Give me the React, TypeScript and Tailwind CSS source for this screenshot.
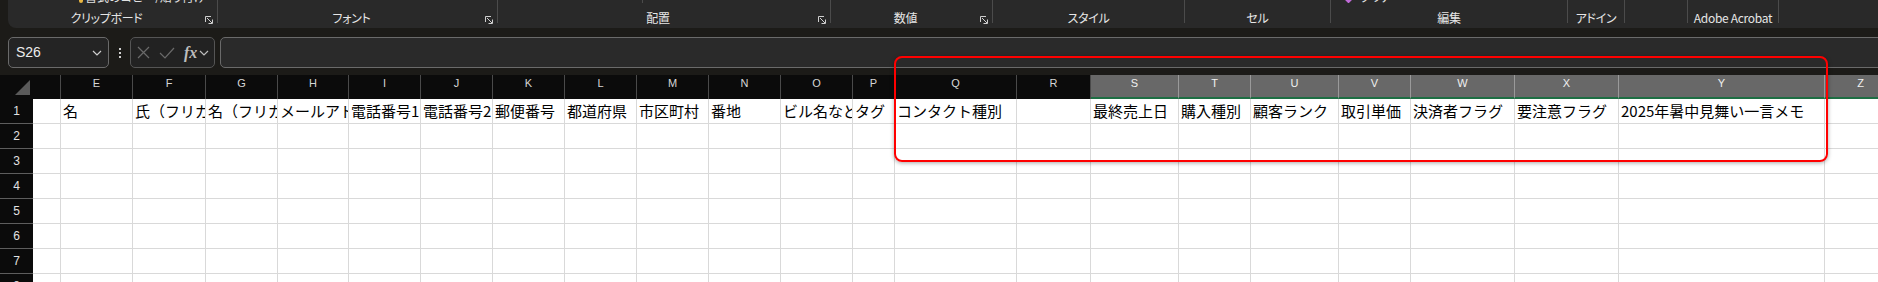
import React from "react";

type Col = { l: string; w: string; t: string; s?: boolean };

const cols: Col[] = [
  { l: "", w: "w-[28px]", t: "" },
  { l: "E", w: "w-[72px]", t: "名" },
  { l: "F", w: "w-[73px]", t: "氏（フリガナ）" },
  { l: "G", w: "w-[72px]", t: "名（フリガナ）" },
  { l: "H", w: "w-[71px]", t: "メールアドレス" },
  { l: "I", w: "w-[72px]", t: "電話番号1" },
  { l: "J", w: "w-[72px]", t: "電話番号2" },
  { l: "K", w: "w-[72px]", t: "郵便番号" },
  { l: "L", w: "w-[72px]", t: "都道府県" },
  { l: "M", w: "w-[72px]", t: "市区町村" },
  { l: "N", w: "w-[72px]", t: "番地" },
  { l: "O", w: "w-[72px]", t: "ビル名など" },
  { l: "P", w: "w-[42px]", t: "タグ" },
  { l: "Q", w: "w-[122px]", t: "コンタクト種別" },
  { l: "R", w: "w-[74px]", t: "" },
  { l: "S", w: "w-[88px]", t: "最終売上日", s: true },
  { l: "T", w: "w-[72px]", t: "購入種別", s: true },
  { l: "U", w: "w-[88px]", t: "顧客ランク", s: true },
  { l: "V", w: "w-[72px]", t: "取引単価", s: true },
  { l: "W", w: "w-[104px]", t: "決済者フラグ", s: true },
  { l: "X", w: "w-[104px]", t: "要注意フラグ", s: true },
  { l: "Y", w: "w-[206px]", t: "2025年暑中見舞い一言メモ", s: true },
  { l: "Z", w: "w-[72px]", t: "", s: true },
];

const JP = "font-['Noto_Sans_CJK_JP','Noto_Sans',sans-serif]";
const UI = "font-['Liberation_Sans','Noto_Sans_CJK_JP',sans-serif]";

function Launcher() {
  return (
    <div className="w-[12px] shrink-0 flex justify-end pr-[4px] mt-[3px]">
      <svg width="8" height="8" viewBox="0 0 8 8" fill="none" stroke="#cfcfcf" strokeWidth="1">
        <path d="M0.5 6 V0.5 H6" />
        <path d="M2 2 L7 7" />
        <path d="M7.5 3.5 V7.5 H3.5" />
      </svg>
    </div>
  );
}

function Sep() {
  return <div className="w-px h-[23px] bg-[#4b4b4b] shrink-0" />;
}

function Group({
  w,
  label,
  launcher,
  top,
}: {
  w: string;
  label?: string;
  launcher?: boolean;
  top?: React.ReactNode;
}) {
  return (
    <div className={`${w} shrink-0 flex flex-col`}>
      <div className="h-[3px] overflow-hidden flex items-end">{top}</div>
      <div className="mt-[7px] h-[16px] flex items-center">
        <div
          className={`flex-1 text-center text-[12px] leading-[16px] text-[#e6e6e6] whitespace-nowrap ${JP} [font-feature-settings:'palt'] tracking-[-0.3px]`}
        >
          {label}
        </div>
        {launcher && <Launcher />}
      </div>
    </div>
  );
}

function Chevron({ color }: { color: string }) {
  return (
    <svg width="10" height="6" viewBox="0 0 10 6" fill="none" stroke={color} strokeWidth="1.2">
      <path d="M1 1 L5 5 L9 1" />
    </svg>
  );
}

export default function App() {
  const rows = [1, 2, 3, 4, 5, 6, 7, 8];
  return (
    <div className={`w-[1878px] h-[282px] overflow-hidden bg-[#1c1b18] relative ${JP}`}>
      {/* Ribbon */}
      <div className="ml-[8px] h-[28px] bg-[#292929] rounded-bl-[8px] flex overflow-hidden">
        <Group
          w="w-[209px]"
          label="クリップボード"
          launcher
          top={
            <div className="flex items-end ml-[71px] gap-[2px]">
              <div className="w-[4px] h-[3px] bg-[#e8b540] rounded-b-[2px]" />
              <span className="text-[12px] leading-[12px] text-[#e0e0e0] whitespace-nowrap [font-feature-settings:'palt']">
                書式のコピー/貼り付け
              </span>
            </div>
          }
        />
        <Sep />
        <Group w="w-[279px]" label="フォント" launcher />
        <Sep />
        <Group
          w="w-[332px]"
          label="配置"
          launcher
          top={<div className="ml-[144px] w-px h-[3px] bg-[#4b4b4b]" />}
        />
        <Sep />
        <Group w="w-[161px]" label="数値" launcher />
        <Sep />
        <Group w="w-[191px]" label="スタイル" />
        <Sep />
        <Group w="w-[145px]" label="セル" />
        <Sep />
        <Group
          w="w-[236px]"
          label="編集"
          top={
            <div className="flex items-end ml-[14px] gap-[8px]">
              <div className="w-[7px] h-[7px] rotate-45 bg-[#c06ad8] mb-[1px]" />
              <span className="text-[12px] leading-[12px] text-[#e0e0e0] whitespace-nowrap [font-feature-settings:'palt']">
                クリア
              </span>
            </div>
          }
        />
        <Sep />
        <Group w="w-[56px]" label="アドイン" />
        <Sep />
        <Group w="w-[62px]" />
        <Sep />
        <Group w="w-[90px]" label="Adobe Acrobat" />
        <Sep />
        <div className="flex-1" />
      </div>

      {/* Formula bar */}
      <div className="mt-[9px] ml-[8px] h-[31px] flex items-stretch">
        <div className="w-[101px] shrink-0 border border-[#6a6a6a] rounded-[5px] bg-[#242424] flex items-center pl-[7px] pr-[6px]">
          <span className={`flex-1 text-[14px] text-[#ececec] ${UI}`}>S26</span>
          <Chevron color="#cfcfcf" />
        </div>
        <div className="w-[21px] shrink-0 flex flex-col items-center justify-center gap-[2px] pt-[1px]">
          <div className="w-[2px] h-[2px] bg-[#d0d0d0]" />
          <div className="w-[2px] h-[2px] bg-[#d0d0d0]" />
          <div className="w-[2px] h-[2px] bg-[#d0d0d0]" />
        </div>
        <div className="w-[85px] shrink-0 border border-[#555555] rounded-[5px] bg-[#222222] flex items-center pl-[6px] gap-[9px]">
          <svg width="13" height="13" viewBox="0 0 13 13" stroke="#6a6a6a" strokeWidth="1.2">
            <path d="M1 1 L12 12 M12 1 L1 12" />
          </svg>
          <svg width="16" height="12" viewBox="0 0 16 12" fill="none" stroke="#6a6a6a" strokeWidth="1.2">
            <path d="M1 6 L6 11 L15 1" />
          </svg>
          <div className="flex items-center gap-[2px]">
            <span className="font-['Liberation_Serif',serif] italic text-[16px] leading-[16px] text-[#bdbdbd] font-semibold">
              fx
            </span>
            <Chevron color="#bdbdbd" />
          </div>
        </div>
        <div className="flex-1 ml-[5px] mr-[-12px] border border-[#6a6a6a] rounded-l-[5px] bg-[#2a2a2a]" />
      </div>

      {/* Grid */}
      <div className="mt-[7px] flex flex-col">
        <div className="flex h-[24px]">
          <div className="w-[33px] shrink-0 bg-[#0b0b0b] relative">
            <svg className="absolute left-[15px] top-[5px]" width="15" height="15" viewBox="0 0 15 15">
              <polygon points="15,0 15,15 0,15" fill="#5a5a5a" />
            </svg>
          </div>
          {cols.map((c, i) =>
            c.s ? (
              <div
                key={i}
                className={`${c.w} shrink-0 bg-[#686868] border-r border-[#9a9a9a] border-b-2 border-b-[#1e6e43] text-center text-[11px] leading-[17px] text-[#f0f0f0] ${UI}`}
              >
                {c.l}
              </div>
            ) : (
              <div
                key={i}
                className={`${c.w} shrink-0 bg-[#0b0b0b] border-r border-[#4a4a4a] text-center text-[11px] leading-[17px] text-[#d6d6d6] ${UI}`}
              >
                {c.l}
              </div>
            )
          )}
        </div>
        {rows.map((r) => (
          <div key={r} className="flex h-[25px]">
            <div
              className={`w-[33px] shrink-0 bg-[#0b0b0b] border-b border-[#5e5e5e] flex items-center justify-center text-[12px] text-[#e2e2e2] ${UI}`}
            >
              {r}
            </div>
            {cols.map((c, i) => (
              <div
                key={i}
                className={`${c.w} shrink-0 bg-white border-r border-b border-[#d9d9d9] overflow-hidden whitespace-nowrap text-[15px] leading-[24px] pl-[2px] text-black`}
              >
                {r === 1 ? c.t : ""}
              </div>
            ))}
          </div>
        ))}
      </div>

      {/* Red annotation frame */}
      <div className="absolute left-[894px] top-[56px] w-[934px] h-[106px] border-2 border-[#ff0000] rounded-[8px] shadow-[0_1px_4px_rgba(0,0,0,0.35)] pointer-events-none" />
    </div>
  );
}
